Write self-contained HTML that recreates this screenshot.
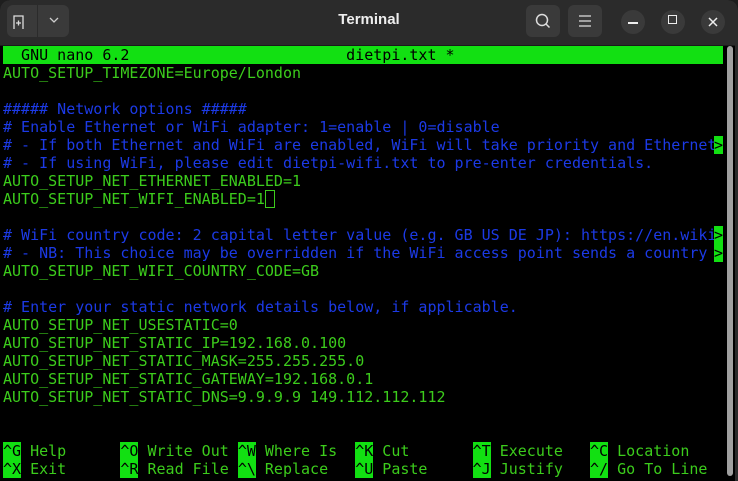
<!DOCTYPE html>
<html><head><style>
html,body{margin:0;padding:0;width:738px;height:481px;overflow:hidden;background:#1e1e1e;}
.win{position:absolute;left:0;top:0;width:738px;height:481px;background:#000;border-radius:10px 10px 0 0;overflow:hidden;}
.hdr{position:absolute;left:0;top:0;width:738px;height:45px;background:#2b2b2b;border-bottom:1px solid #1a1a1a;}
.btn{position:absolute;top:5px;height:32px;background:#3a3a3a;border-radius:6px;}
.circ{position:absolute;top:10px;width:24px;height:24px;border-radius:12px;background:#3a3a3a;}
.title{position:absolute;left:0;width:738px;top:11px;text-align:center;color:#eee;font:bold 15px "Liberation Sans",sans-serif;}
.term{position:absolute;left:3px;top:46px;font-family:"DejaVu Sans Mono","Liberation Mono",monospace;font-size:15px;line-height:18px;white-space:pre;color:#3ccc1c;}
.r{position:absolute;left:0;height:18px;}
.b{color:#1c3ae6;}
.bar{background:#12e012;color:#000;width:720px;}
.k{background:#12e012;color:#000;}
.mk{position:absolute;left:711px;width:9px;height:18px;background:#12e012;color:#000;}
.sb{position:absolute;left:727px;top:46px;width:6px;height:430px;background:#a0a0a0;border-radius:3px;}
.edge{position:absolute;left:735px;top:45px;width:3px;height:436px;background:#2b2b2b;}
</style></head><body>
<div class="win">
<div class="hdr">
 <div class="btn" style="left:7px;width:62px;"></div>
 <div style="position:absolute;left:37px;top:5px;width:1px;height:32px;background:#2b2b2b"></div>
 <svg style="position:absolute;left:12px;top:12px" width="20" height="20" viewBox="0 0 20 20"><path d="M2 17V4h9v13" fill="none" stroke="#ddd" stroke-width="1.3"/><path d="M6.5 8.5v5M4 11h5" stroke="#ddd" stroke-width="1.3"/></svg>
 <svg style="position:absolute;left:47px;top:15px" width="14" height="10" viewBox="0 0 14 10"><path d="M3 3l4 4 4-4" fill="none" stroke="#ccc" stroke-width="1.3"/></svg>
 <div class="title">Terminal</div>
 <div class="btn" style="left:526px;width:34px;"></div>
 <svg style="position:absolute;left:533px;top:11px" width="20" height="20" viewBox="0 0 20 20"><circle cx="9" cy="9" r="5.5" fill="none" stroke="#ddd" stroke-width="1.5"/><path d="M13 13l3.5 3.5" stroke="#ddd" stroke-width="1.5"/></svg>
 <div class="btn" style="left:568px;width:34px;"></div>
 <svg style="position:absolute;left:577px;top:13px" width="16" height="16" viewBox="0 0 16 16"><path d="M2 3h12M2 8h12M2 13h12" stroke="#ddd" stroke-width="1.3"/></svg>
 <div class="circ" style="left:621px"></div>
 <div style="position:absolute;left:628px;top:22px;width:10px;height:1.5px;background:#eee"></div>
 <div class="circ" style="left:661px"></div>
 <div style="position:absolute;left:668px;top:15px;height:9px;border:1.5px solid #eee;box-sizing:border-box;width:9px"></div>
 <div class="circ" style="left:701px"></div>
 <svg style="position:absolute;left:707px;top:16px" width="12" height="12" viewBox="0 0 12 12"><path d="M2 2l8 8M10 2l-8 8" stroke="#eee" stroke-width="1.5"/></svg>
</div>
<div class="term">
<div class="r bar" style="top:0">  GNU nano 6.2                        dietpi.txt *</div>
<div class="r" style="top:18px">AUTO_SETUP_TIMEZONE=Europe/London</div>
<div class="r b" style="top:54px">##### Network options #####</div>
<div class="r b" style="top:72px"># Enable Ethernet or WiFi adapter: 1=enable | 0=disable</div>
<div class="r b" style="top:90px"># - If both Ethernet and WiFi are enabled, WiFi will take priority and Ethernet</div><div class="mk" style="top:90px">&gt;</div>
<div class="r b" style="top:108px"># - If using WiFi, please edit dietpi-wifi.txt to pre-enter credentials.</div>
<div class="r" style="top:126px">AUTO_SETUP_NET_ETHERNET_ENABLED=1</div>
<div class="r" style="top:144px">AUTO_SETUP_NET_WIFI_ENABLED=1<span style="display:inline-block;width:8px;height:16px;border:1px solid #3ccc1c;vertical-align:top"></span></div>
<div class="r b" style="top:180px"># WiFi country code: 2 capital letter value (e.g. GB US DE JP): https://en.wiki</div><div class="mk" style="top:180px">&gt;</div>
<div class="r b" style="top:198px"># - NB: This choice may be overridden if the WiFi access point sends a country </div><div class="mk" style="top:198px">&gt;</div>
<div class="r" style="top:216px">AUTO_SETUP_NET_WIFI_COUNTRY_CODE=GB</div>
<div class="r b" style="top:252px"># Enter your static network details below, if applicable.</div>
<div class="r" style="top:270px">AUTO_SETUP_NET_USESTATIC=0</div>
<div class="r" style="top:288px">AUTO_SETUP_NET_STATIC_IP=192.168.0.100</div>
<div class="r" style="top:306px">AUTO_SETUP_NET_STATIC_MASK=255.255.255.0</div>
<div class="r" style="top:324px">AUTO_SETUP_NET_STATIC_GATEWAY=192.168.0.1</div>
<div class="r" style="top:342px">AUTO_SETUP_NET_STATIC_DNS=9.9.9.9 149.112.112.112</div>
<div class="r" style="top:396px"><span class="k">^G</span> Help      <span class="k">^O</span> Write Out <span class="k">^W</span> Where Is  <span class="k">^K</span> Cut       <span class="k">^T</span> Execute   <span class="k">^C</span> Location</div>
<div class="r" style="top:414px"><span class="k">^X</span> Exit      <span class="k">^R</span> Read File <span class="k">^\</span> Replace   <span class="k">^U</span> Paste     <span class="k">^J</span> Justify   <span class="k">^/</span> Go To Line</div>
</div>
<div class="edge"></div>
<div class="sb"></div>
</div>
</body></html>
